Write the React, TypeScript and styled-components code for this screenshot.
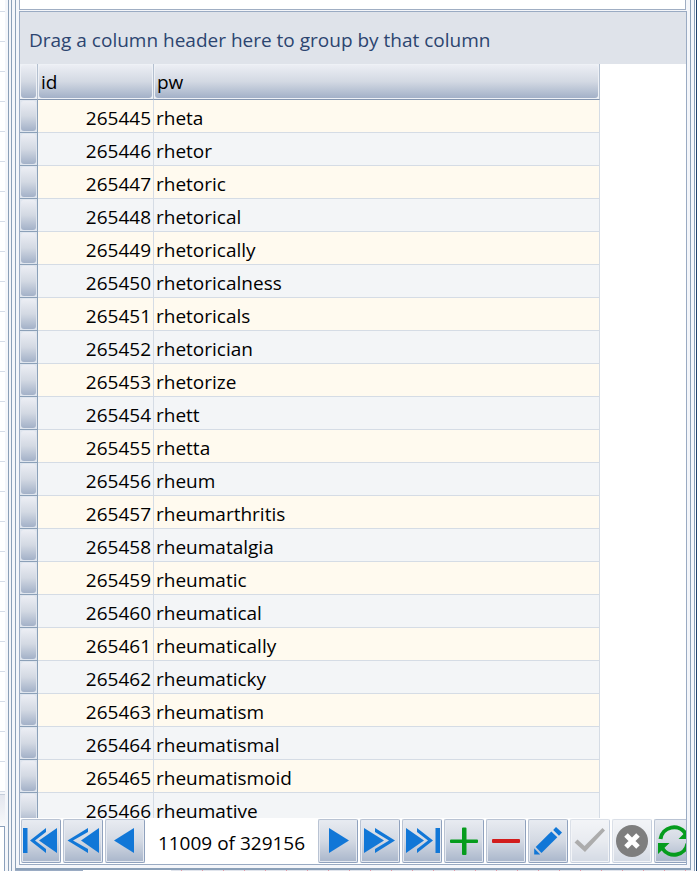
import React from 'react';
import styled, { createGlobalStyle, css } from 'styled-components';

const Global = createGlobalStyle`
  * { box-sizing: border-box; }
  html, body, #root { height: 100%; }
  body {
    margin: 0;
    overflow: hidden;
    background: #f4f6fa;
    color: #000;
    font-family: "Open Sans", "Noto Sans", sans-serif;
    font-size: 19px;
  }
  button { font: inherit; }
`;

const Window = styled.div`
  height: 100%;
  display: grid;
  grid-template-columns: 8px 1fr 6px;
`;

const Neighbour = styled.aside`
  display: flex;
  flex-direction: column;
  overflow: hidden;
`;

const NeighbourRows = styled.div`
  flex: none;
  height: 792px;
  width: 5px;
  background: linear-gradient(#fff 0 11px, transparent 11px),
    linear-gradient(#d5dce8, #d5dce8) 0 11px / 5px 1px no-repeat,
    repeating-linear-gradient(#fff 0 11px, #d5dce8 11px 12px, #fff 12px 30px);
`;

const NeighbourFoot = styled.div`
  width: 5px;
  flex: none;
  height: 32px;
  margin-top: 2px;
  border-top: 1px solid #c5cedb;
  background: linear-gradient(#e3e6ee, #f8f9fb);
`;

const NeighbourBox = styled.div`
  width: 5px;
  flex: 1;
  background: #fff;
  border: solid #8ba0bc;
  border-width: 1px 1px 0 0;
`;

const Frame = styled.main`
  min-width: 0;
  min-height: 0;
  display: flex;
  border-left: 1px solid #8ba0b8;
  padding-left: 2px;
`;

const FrameInner = styled.div`
  flex: 1;
  min-width: 0;
  display: flex;
  flex-direction: column;
  border-left: 1px solid #8ba0b8;
  padding-left: 3px;
`;

const Content = styled.div`
  flex: 1;
  min-width: 0;
  min-height: 0;
  display: flex;
  flex-direction: column;
  border: solid #8ba0b8;
  border-width: 0 1px 2px;
  padding: 0 3px 3px;
`;

const UpperPane = styled.div`
  flex: none;
  height: 10px;
  margin: 0 1px 1px 0;
  background: #fff;
  border: solid #a0aec3;
  border-width: 0 1px 1px;
`;

const GridPane = styled.section`
  flex: 1;
  min-height: 0;
  display: flex;
  flex-direction: column;
  overflow: hidden;
  background: #fff;
  border: 1px solid #9aabc3;
`;

const GroupBar = styled.div`
  flex: none;
  height: 52px;
  padding: 4px 0 0 9px;
  display: flex;
  align-items: center;
  background: #dfe3ea;
  color: #2c4570;
  white-space: nowrap;
`;

const TableArea = styled.div`
  flex: 1;
  min-height: 0;
  overflow: hidden;
`;

const Table = styled.table`
  width: 580px;
  table-layout: fixed;
  border-collapse: separate;
  border-spacing: 0;
`;

const raised = css`
  border-radius: 3px;
  background: linear-gradient(#eceef4, #d3d9e3 50%, #a3b1c8);
`;

const Head = styled.th<{ $w?: number }>`
  width: ${p => (p.$w ? `${p.$w}px` : 'auto')};
  height: 36px;
  padding: 1px;
  background: #eef1f6;
  border-right: 1px solid #b4c0d0;
  border-bottom: 1px solid #8496b0;
  text-align: left;
  font-weight: 400;
`;

const HeadFace = styled.div`
  ${raised}
  height: 33px;
  padding: 2px 2px 0;
  line-height: 31px;
`;

const Selector = styled.td`
  padding: 1px;
  background: #dfe5ee;
  border-right: 1px solid #8ba0b8;
  border-bottom: 1px solid #8ba0b8;
`;

const SelectorFace = styled.div`
  ${raised}
  height: 30px;
`;

const Cell = styled.td<{ $right?: boolean }>`
  height: 33px;
  padding: 4px 2px 0;
  line-height: 28px;
  border-right: 1px solid #d5dce5;
  border-bottom: 1px solid #d5dce5;
  text-align: ${p => (p.$right ? 'right' : 'left')};
`;

const Row = styled.tr`
  background: #f3f5f7;
  &:nth-child(odd) { background: #fffaef; }
`;

const Navigator = styled.nav`
  flex: none;
  height: 46px;
  padding: 1px 0 0 1px;
  display: flex;
  gap: 2px;
  overflow: hidden;
`;

const NavButton = styled.button`
  flex: none;
  width: 40px;
  height: 44px;
  padding: 0;
  display: grid;
  place-items: center;
  border: 1px solid #b9c3d3;
  border-right-color: #8fa1bd;
  border-bottom-color: #8fa1bd;
  border-radius: 2px;
  background: linear-gradient(#e8ebf1, #d3d9e3 50%, #a9b6cb);
  box-shadow: inset 0 0 0 1px #e6eaf1;
  &:disabled { opacity: 0.5; }
  svg { display: block; }
`;

const Position = styled.output`
  flex: none;
  width: 169px;
  padding-top: 2px;
  line-height: 44px;
  text-align: center;
`;

const RightEdge = styled.div`
  display: flex;
  padding-left: 3px;
  border-right: 1px solid #23456f;
`;

const RightLine = styled.div`
  width: 2px;
  border-left: 1px solid #8ba0b8;
  background: #fff;
`;

const Below = styled.footer`
  flex: none;
  height: 1px;
  display: flex;
`;

const BelowTab = styled.div`
  width: 68px;
  background: #9aabc3;
`;

const BelowGap = styled.div`
  width: 88px;
  background: #fff;
`;

const BelowRuler = styled.div`
  flex: 1;
  background: repeating-linear-gradient(90deg, #e0e4ec 0 10px, #e49aa8 10px 11px, #e0e4ec 11px 21px);
`;

const words = [
  'rheta', 'rhetor', 'rhetoric', 'rhetorical', 'rhetorically', 'rhetoricalness',
  'rhetoricals', 'rhetorician', 'rhetorize', 'rhett', 'rhetta', 'rheum',
  'rheumarthritis', 'rheumatalgia', 'rheumatic', 'rheumatical', 'rheumatically',
  'rheumaticky', 'rheumatism', 'rheumatismal', 'rheumatismoid', 'rheumative',
];

const Icon = ({ children }: { children: React.ReactNode }) => (
  <svg width="38" height="42" viewBox="0 0 38 42" fill="#1177d7" aria-hidden="true">
    {children}
  </svg>
);

export default function App() {
  return (
    <>
      <Global />
      <Window>
        <Neighbour>
          <NeighbourRows />
          <NeighbourFoot />
          <NeighbourBox />
        </Neighbour>
        <Frame>
          <FrameInner>
            <Content>
              <UpperPane />
              <GridPane>
                <GroupBar>Drag a column header here to group by that column</GroupBar>
                <TableArea>
                  <Table>
                    <thead>
                      <tr>
                        <Head $w={18} aria-label="Row"><HeadFace /></Head>
                        <Head $w={116} scope="col"><HeadFace>id</HeadFace></Head>
                        <Head scope="col"><HeadFace>pw</HeadFace></Head>
                      </tr>
                    </thead>
                    <tbody>
                      {words.map((word, i) => (
                        <Row key={word}>
                          <Selector><SelectorFace /></Selector>
                          <Cell $right>{265445 + i}</Cell>
                          <Cell>{word}</Cell>
                        </Row>
                      ))}
                    </tbody>
                  </Table>
                </TableArea>
                <Navigator aria-label="Records">
                  <NavButton aria-label="First">
                    <Icon>
                      <path d="M1 8h4.500v25H1zM35 8v25L17 20.500z" />
                      <path d="M24 8v4l-11 8.500L24 29v4L8 20.500z" />
                    </Icon>
                  </NavButton>
                  <NavButton aria-label="Previous page">
                    <Icon>
                      <path d="M35 8v25L17 20.500z" />
                      <path d="M24 8v4L9 20.500L24 29v4L3.500 20.500z" />
                    </Icon>
                  </NavButton>
                  <NavButton aria-label="Previous">
                    <Icon><path d="M28 8v25L8 20.500z" /></Icon>
                  </NavButton>
                  <Position>11009 of 329156</Position>
                  <NavButton aria-label="Next">
                    <Icon><path d="M10 8v25l20-12.500z" /></Icon>
                  </NavButton>
                  <NavButton aria-label="Next page">
                    <Icon>
                      <path d="M3 8l20 12.500L3 33z" />
                      <path d="M14 8l20 12.500L14 33v-4l14-8.500L14 12z" />
                    </Icon>
                  </NavButton>
                  <NavButton aria-label="Last">
                    <Icon>
                      <path d="M3 8l18 12.500L3 33zM32.500 8H37v25h-4.500z" />
                      <path d="M14 8l16 12.500L14 33v-4l11-8.500L14 12z" />
                    </Icon>
                  </NavButton>
                  <NavButton aria-label="Insert">
                    <Icon>
                      <path
                        d="M18 7.500h2.500q1 0 1 1v11h10.500q1 0 1 1v1.500q0 1-1 1H21.500v11q0 1-1 1H18q-1 0-1-1V23H6q-1 0-1-1v-1.500q0-1 1-1h11v-11q0-1 1-1z"
                        fill="#059c1d"
                      />
                    </Icon>
                  </NavButton>
                  <NavButton aria-label="Delete">
                    <Icon><rect x="5" y="19" width="28" height="4" rx="1" fill="#d21c1c" /></Icon>
                  </NavButton>
                  <NavButton aria-label="Edit">
                    <Icon>
                      <path d="M27 7l6 5.500-3 3.200-5.800-5.800z" />
                      <path d="M22.300 11.500l6 5.800L12.500 33 6.700 27z" />
                      <path d="M5.200 28.300l6 6.300h-6z" />
                    </Icon>
                  </NavButton>
                  <NavButton aria-label="Post" disabled>
                    <Icon><path fill="#5c5c5c" d="M3.500 22.500l3-3 7 6.500L31.500 8l2.500 2.500L14 32z" /></Icon>
                  </NavButton>
                  <NavButton aria-label="Cancel" disabled>
                    <Icon>
                      <circle cx="19" cy="21" r="16" fill="#000" />
                      <path d="M13 15l12 12M25 15L13 27" stroke="#fff" strokeWidth="5" />
                    </Icon>
                  </NavButton>
                  <NavButton aria-label="Refresh">
                    <Icon>
                      <path
                        d="M5.500 19A13.700 13.700 0 0 1 30.500 13.500M32.500 23.500A13.700 13.700 0 0 1 7.500 28.500"
                        fill="none"
                        stroke="#059c1d"
                        strokeWidth="4"
                      />
                      <path fill="#059c1d" d="M34.500 8v11H23.500zM3 34V23h11.500z" />
                    </Icon>
                  </NavButton>
                </Navigator>
              </GridPane>
            </Content>
            <Below>
              <BelowTab />
              <BelowGap />
              <BelowRuler />
            </Below>
          </FrameInner>
        </Frame>
        <RightEdge><RightLine /></RightEdge>
      </Window>
    </>
  );
}
